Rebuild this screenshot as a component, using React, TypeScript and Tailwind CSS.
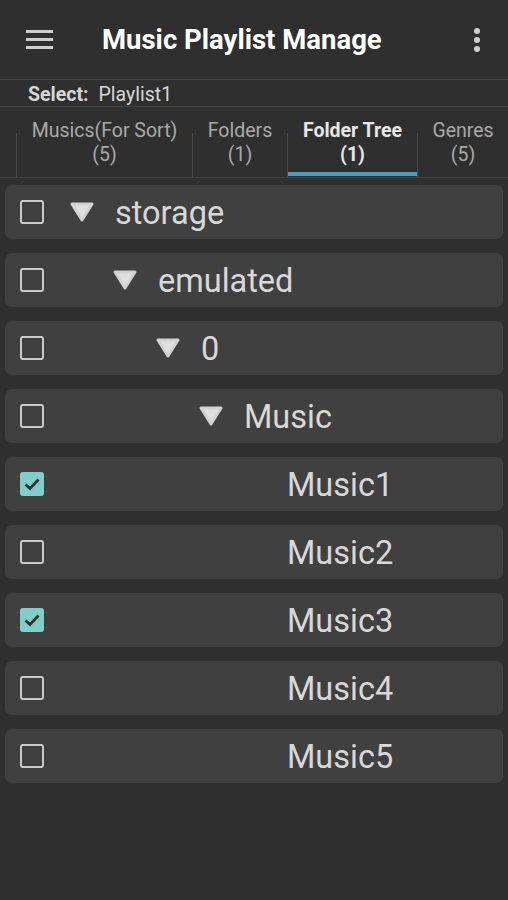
import React from "react"

type Node = { label: string; level: number; folder: boolean; checked: boolean }

const nodes: Node[] = [
  { label: "storage", level: 0, folder: true, checked: false },
  { label: "emulated", level: 1, folder: true, checked: false },
  { label: "0", level: 2, folder: true, checked: false },
  { label: "Music", level: 3, folder: true, checked: false },
  { label: "Music1", level: 4, folder: false, checked: true },
  { label: "Music2", level: 4, folder: false, checked: false },
  { label: "Music3", level: 4, folder: false, checked: true },
  { label: "Music4", level: 4, folder: false, checked: false },
  { label: "Music5", level: 4, folder: false, checked: false },
]

const tabs = [
  { title: "Musics(For Sort)", count: "(5)", w: "w-[176px]", active: false },
  { title: "Folders", count: "(1)", w: "w-[95px]", active: false },
  { title: "Folder Tree", count: "(1)", w: "w-[130px]", active: true },
  { title: "Genres", count: "(5)", w: "w-[91px]", active: false },
]

function Checkbox({ checked }: { checked: boolean }) {
  if (checked) {
    return (
      <div className="w-[24px] h-[24px] rounded-[3px] bg-[#7fcfc8] flex items-center justify-center">
        <svg width="24" height="24" viewBox="0 0 24 24">
          <path d="M5.5 12.5 L10 16.5 L18.5 7.5" fill="none" stroke="#2f3333" strokeWidth="2.8" />
        </svg>
      </div>
    )
  }
  return <div className="w-[24px] h-[24px] rounded-[3px] border-[2.5px] border-[#c9c9c9]" />
}

function Triangle() {
  return (
    <svg width="26" height="22" viewBox="0 0 26 22">
      <path
        d="M3 3 L23 3 L13 19 Z"
        fill="#e0e0e0"
        stroke="#d2d2d2"
        strokeWidth="3"
        strokeLinejoin="round"
      />
    </svg>
  )
}

export default function App() {
  return (
    <div className="w-[508px] h-[900px] bg-[#2f2f2f] font-['Roboto',sans-serif] overflow-hidden">
      <div className="h-[80px] flex items-center border-b border-[#454545]">
        <div className="w-[102px] pl-[26px]">
          <div className="flex flex-col gap-[5px] w-[27px]">
            <div className="h-[3px] bg-[#cfcfcf]" />
            <div className="h-[3px] bg-[#cfcfcf]" />
            <div className="h-[3px] bg-[#cfcfcf]" />
          </div>
        </div>
        <div className="flex-1 text-[27.5px] font-bold text-white pt-[1px]">Music Playlist Manage</div>
        <div className="w-[62px] flex flex-col items-center gap-[3px]">
          <div className="w-[6px] h-[6px] rounded-full bg-[#d0d0d0]" />
          <div className="w-[6px] h-[6px] rounded-full bg-[#d0d0d0]" />
          <div className="w-[6px] h-[6px] rounded-full bg-[#d0d0d0]" />
        </div>
      </div>

      <div className="h-[27px] flex items-center pl-[28px] pt-[4px] border-b border-[#454545] text-[19.5px] text-[#d6d6d6]">
        <span className="font-bold">Select:</span>
        <span className="ml-[10px]">Playlist1</span>
      </div>

      <div className="h-[71px] flex items-stretch border-b border-[#454545]">
        <div className="w-[16px]" />
        {tabs.map((t, i) => (
          <div key={i} className={`${t.w} shrink-0 flex`}>
            <div className="w-px h-[44px] self-end bg-[#4a4a4a]" />
            <div className="flex-1 flex flex-col">
              <div
                className={`flex-1 flex flex-col items-center justify-center text-[19.5px] leading-[24px] pt-[7px] ${
                  t.active ? "font-bold text-[#e6e6e6]" : "text-[#a9a9a9]"
                }`}
              >
                <span className="whitespace-nowrap">{t.title}</span>
                <span>{t.count}</span>
              </div>
              <div className={`h-[4px] mb-[1px] ${t.active ? "bg-[#4a9dc2]" : ""}`} />
            </div>
          </div>
        ))}
      </div>

      <div className="flex flex-col gap-[14px] pt-[7px] px-[5px]">
        {nodes.map((n, i) => (
          <div key={i} className="h-[54px] rounded-[7px] bg-[#404040] flex items-center">
            <div className="w-[64px] pl-[15px] flex items-center">
              <Checkbox checked={n.checked} />
            </div>
            <div style={{ width: n.level * 43 }} className="shrink-0" />
            <div className="w-[46px] shrink-0 flex items-center">{n.folder ? <Triangle /> : null}</div>
            <span className="text-[32.5px] text-[#d8d8d8] leading-none pt-[2px]">{n.label}</span>
          </div>
        ))}
      </div>
    </div>
  )
}
